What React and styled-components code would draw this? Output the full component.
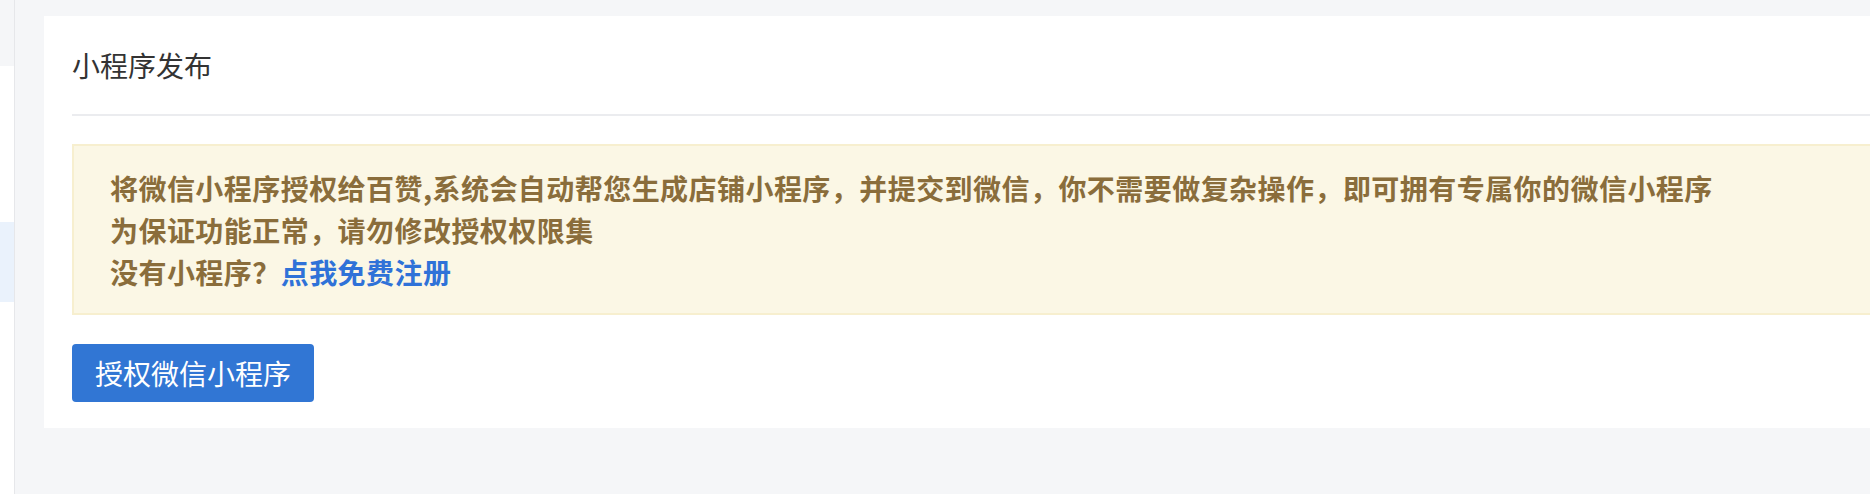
import styled, { createGlobalStyle } from 'styled-components';

const GlobalStyle = createGlobalStyle`
	html, body {
		margin: 0;
		padding: 0;
		overflow: hidden;
		background: #f5f6f8;
		font-family: 'Noto Sans CJK SC', 'Noto Sans', sans-serif;
	}
`;

const App = () => {
	return (
		<>
			<GlobalStyle />
			<StyledPage>
				<Sidebar>
					<SideItem $tone='gray' $height={66} />
					<SideItem $tone='white' $height={156} />
					<SideItem $tone='active' $height={80} />
					<SideItem $tone='white' $grow />
				</Sidebar>

				<Main>
					<Card>
						<CardHeader>
							<h2>小程序发布</h2>
						</CardHeader>

						<CardBody>
							<Notice>
								<p>
									将微信小程序授权给百赞,系统会自动帮您生成店铺小程序，并提交到微信，你不需要做复杂操作，即可拥有专属你的微信小程序
								</p>
								<p>为保证功能正常，请勿修改授权权限集</p>
								<p>
									没有小程序？<a href='#register'>点我免费注册</a>
								</p>
							</Notice>

							<AuthButton type='button'>授权微信小程序</AuthButton>
						</CardBody>
					</Card>
				</Main>
			</StyledPage>
		</>
	);
};

export default App;

const StyledPage = styled.div`
	display: flex;
	width: 100vw;
	height: 494px;
	overflow: hidden;
`;

const Sidebar = styled.aside`
	display: flex;
	flex-direction: column;
	width: 14px;
	flex-shrink: 0;
	border-right: 1px solid #e6e7ea;
`;

const sideColors = {
	gray: '#f5f6f8',
	white: '#ffffff',
	active: '#eaf2fc',
};

const SideItem = styled.div`
	height: ${({ $height }) => ($height ? `${$height}px` : 'auto')};
	flex: ${({ $grow }) => ($grow ? '1' : 'none')};
	background: ${({ $tone }) => sideColors[$tone]};
`;

const Main = styled.main`
	flex: 1;
	min-width: 0;
	padding: 16px 0 0 29px;
	background: #f5f6f8;
`;

const Card = styled.section`
	background: #ffffff;
	padding: 0 0 26px 28px;
	margin-right: -40px;
`;

const CardHeader = styled.header`
	display: flex;
	align-items: center;
	height: 98px;
	border-bottom: 2px solid #ebecef;

	h2 {
		margin: 0;
		font-size: 28px;
		font-weight: 400;
		color: #333333;
	}
`;

const CardBody = styled.div`
	padding-top: 28px;
	display: flex;
	flex-direction: column;
	align-items: flex-start;
`;

const Notice = styled.div`
	align-self: stretch;
	box-sizing: border-box;
	height: 171px;
	padding: 21px 36px 0;
	background: #fbf7e5;
	border: 2px solid #f7efcf;
	color: #8a6d3b;
	font-size: 28px;
	font-weight: 700;
	line-height: 42px;
	letter-spacing: 0.45px;

	p {
		margin: 0;
		white-space: nowrap;
	}

	a {
		color: #2f72d8;
		text-decoration: none;
	}
`;

const AuthButton = styled.button`
	margin-top: 29px;
	height: 58px;
	padding: 0 23px;
	border: none;
	border-radius: 4px;
	background: #3176d4;
	color: #ffffff;
	font-family: inherit;
	font-size: 28px;
	font-weight: 400;
	cursor: pointer;
`;
